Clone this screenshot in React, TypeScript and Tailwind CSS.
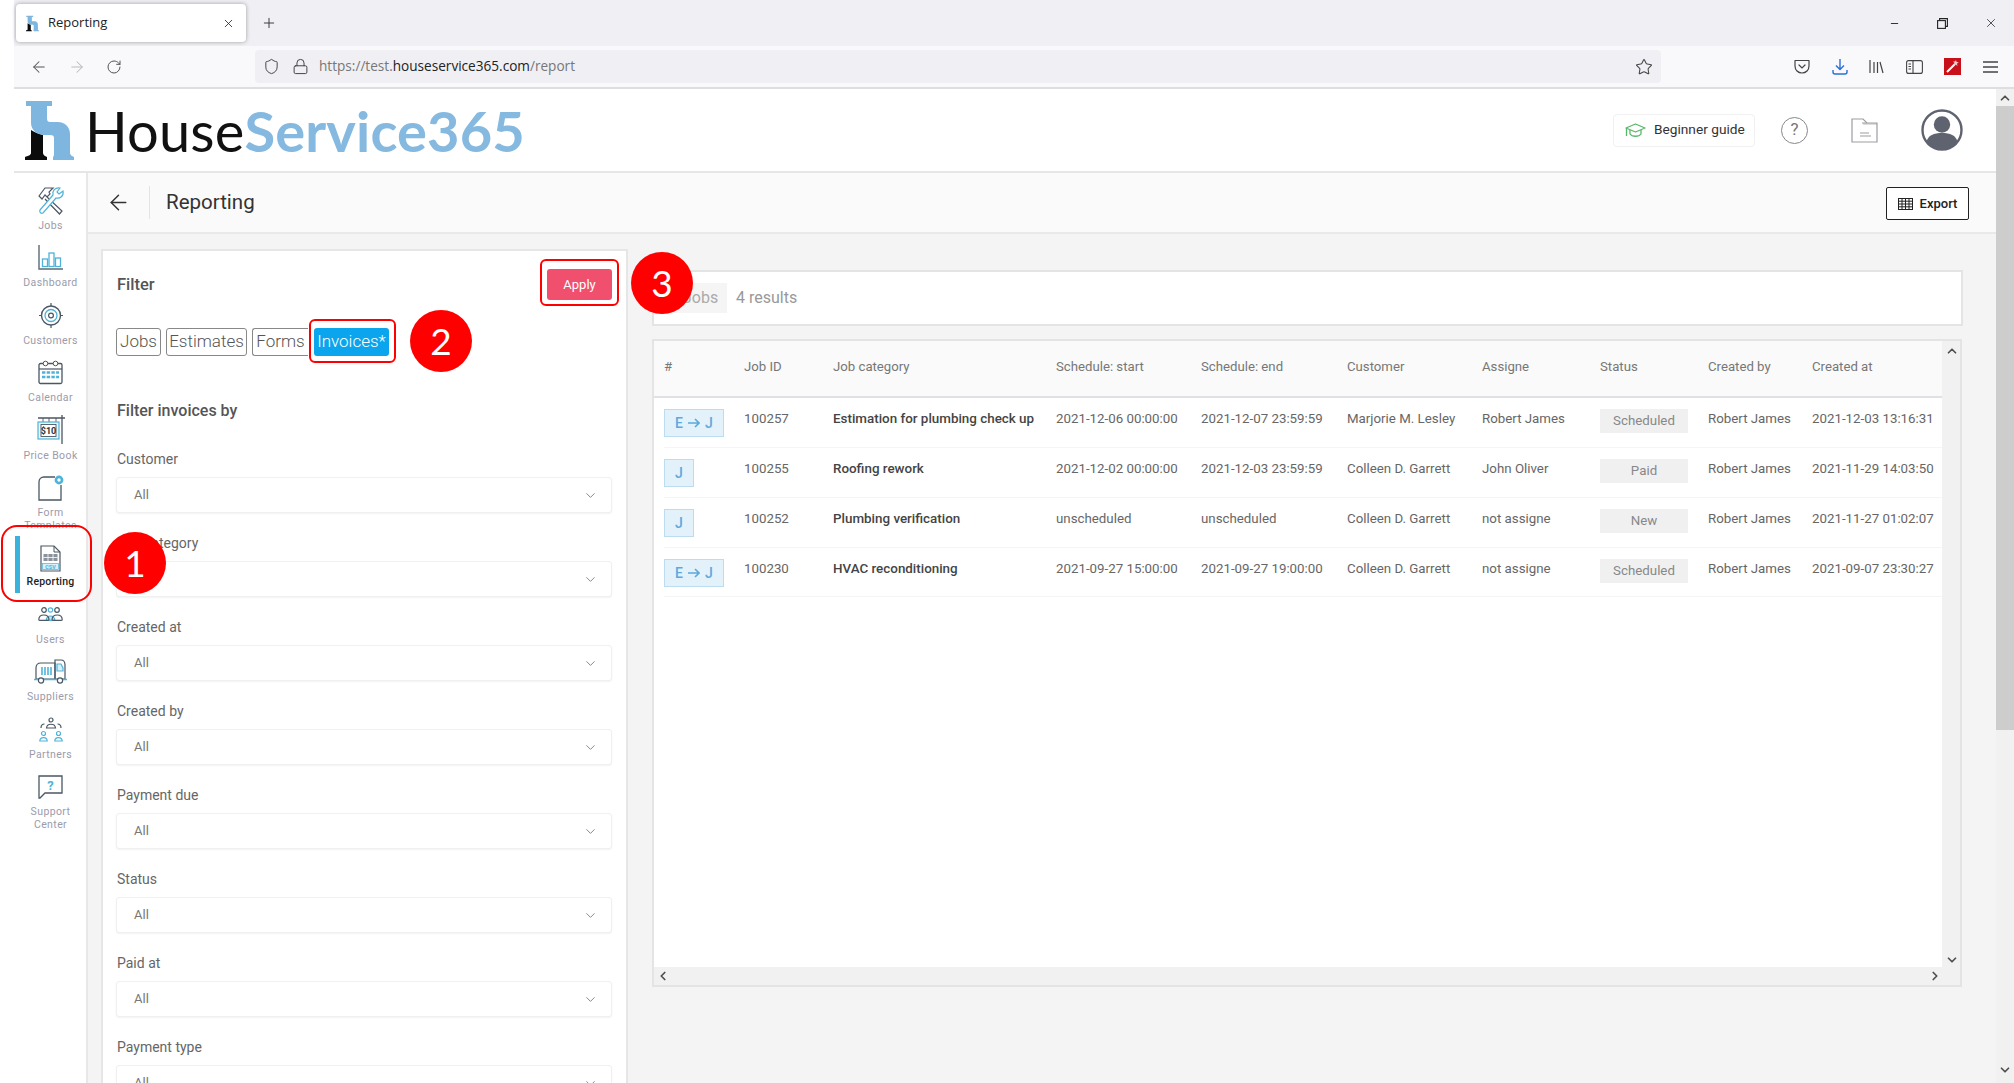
import { ArrowLeft, ArrowRight, ChevronDown, ChevronLeft, ChevronRight, ChevronUp, Lock, Minus, Plus, RotateCw, Shield, Star, X } from "lucide-react";
import type { ReactNode } from "react";

const DARK = "#4b5763";
const BLUE = "#4fb3d9";

const LogoMark = ({ className }: { className: string }) => (
    <svg className={className} viewBox="0 0 49 59">
        <path d="M6 29 C9 31 14 33 18 34 V52 C18 54 20 55 22 56 V59 H0 V56 C3 55 6 54 6 52 Z" fill="#0b0b0b" />
        <path
            d="M1 0 H27 V5 H22 V17 C22 20 23 21 25 21 H33 C40 21 45 26 45 33 V52 C45 54 47 55 49 56 V59 H28 V56 C29 55 29 54 29 52 V37 C29 35 28 34 25 34 H19 C12 34 6 29 6 22 V5 H1 Z"
            fill="#7fb6e0"
        />
    </svg>
);

const JobsIcon = () => (
    <svg className="w-[29px] h-[29px]" viewBox="0 0 29 29" fill="none" strokeWidth="1.2">
        <path d="M3 10 L9 2 L17 2 L13 6 L14 8 L11 11 L9 9 L6 13 Z" stroke={DARK} fill="#fff" />
        <path d="M11 11 L26 25 L23.5 28 L9 13" stroke={DARK} fill="#fff" />
        <path d="M4 24 L17 9 C16 5 19 1 24 2 L21 6 L23 8 L27 5 C28 10 24 13 20 12 L7 27 C5 28 3 26 4 24 Z" stroke={BLUE} fill="#fff" />
    </svg>
);

const DashboardIcon = () => (
    <svg className="w-[25px] h-[25px]" viewBox="0 0 25 25" fill="none">
        <path d="M1 0 V24 H25" stroke="#5a6b78" strokeWidth="1.4" />
        <rect x="4.5" y="14" width="5" height="7.5" stroke={BLUE} strokeWidth="1.3" />
        <rect x="11" y="8" width="5" height="13.5" stroke={BLUE} strokeWidth="1.3" />
        <rect x="17.5" y="13" width="5" height="8.5" stroke={BLUE} strokeWidth="1.3" />
    </svg>
);

const CustomersIcon = () => (
    <svg className="w-[24px] h-[25px]" viewBox="0 0 24 25" fill="none">
        <circle cx="12" cy="12.5" r="9.5" stroke={DARK} strokeWidth="1.4" />
        <circle cx="12" cy="12.5" r="6" stroke={BLUE} strokeWidth="1.3" />
        <circle cx="12" cy="12.5" r="2.4" stroke={DARK} strokeWidth="1.2" />
        <path d="M12 0 V3 M12 22 V25 M0 12.5 H2.5 M21.5 12.5 H24" stroke={DARK} strokeWidth="1.2" />
    </svg>
);

const CalendarIcon = () => (
    <svg className="w-[25px] h-[25px]" viewBox="0 0 25 25" fill="none">
        <rect x="1" y="3.5" width="23" height="20" rx="1.5" stroke={DARK} strokeWidth="1.3" />
        <path d="M1 9 H24" stroke={DARK} strokeWidth="1.2" />
        <circle cx="7.5" cy="3.5" r="2.3" fill="#fff" stroke={DARK} />
        <circle cx="17.5" cy="3.5" r="2.3" fill="#fff" stroke={DARK} />
        <path d="M4 12.5 H21 M4 17 H21" stroke={BLUE} strokeWidth="2.6" strokeDasharray="3.4 1.3" />
    </svg>
);

const PriceBookIcon = () => (
    <svg className="w-[28px] h-[30px]" viewBox="0 0 28 30">
        <path d="M1 3 H28 M25 0 V29" stroke={DARK} strokeWidth="1.3" fill="none" />
        <path d="M6 3 V7 M12 3 V7 M19 3 V7" stroke={DARK} strokeWidth="0.9" fill="none" />
        <rect x="1" y="7" width="21" height="17" stroke={BLUE} strokeWidth="1.2" fill="#e8f5fb" />
        <rect x="4" y="9.5" width="15" height="12" stroke={DARK} strokeWidth="0.9" fill="#fff" />
        <text x="11.5" y="19" textAnchor="middle" fontSize="9" fontWeight="700" fill="#333" fontFamily="Roboto, sans-serif">$10</text>
    </svg>
);

const FormIcon = () => (
    <svg className="w-[26px] h-[26px]" viewBox="0 0 26 26" fill="none">
        <path d="M6 2 H17 M23 10 V25 H1 V7 C1 4 3 2 6 2" stroke={DARK} strokeWidth="1.3" />
        <circle cx="21" cy="5" r="4.4" fill={BLUE} />
        <circle cx="21" cy="5" r="1.7" fill="#fff" />
    </svg>
);

const ReportingIcon = () => (
    <svg className="w-[21px] h-[27px]" viewBox="0 0 21 27" fill="none">
        <path d="M1 1 H14 L20 7 V26 H1 Z" stroke={DARK} strokeWidth="1.2" fill="#fff" />
        <path d="M14 1 V7 H20" stroke={DARK} strokeWidth="1" />
        <rect x="3.5" y="9" width="14" height="7" fill="#8a929b" />
        <path d="M3.5 12.5 H17.5 M8 9 V16 M13 9 V16" stroke="#fff" strokeWidth="0.8" />
        <rect x="2.5" y="18.5" width="16" height="6" fill="#d9eef8" stroke={BLUE} strokeWidth="0.7" />
        <text x="10.5" y="23.6" textAnchor="middle" fontSize="5.4" fontWeight="700" fill={BLUE} fontFamily="Roboto, sans-serif">CSV</text>
    </svg>
);

const UsersIcon = () => (
    <svg className="w-[25px] h-[14px]" viewBox="0 0 25 14" fill="none" strokeWidth="1.2">
        <circle cx="12.5" cy="3" r="2.2" stroke={BLUE} />
        <path d="M8 13.4 C9 7.5 16 7.5 17 13.4 Z" fill={BLUE} fillOpacity="0.35" stroke={BLUE} />
        <circle cx="6" cy="3" r="2.3" stroke={DARK} fill="#fff" />
        <circle cx="19" cy="3" r="2.3" stroke={DARK} fill="#fff" />
        <path d="M0.8 12.5 C1 6.5 10.5 6.5 11 12.5 C11 13.4 10 13.4 9 13.4 H2 C1 13.4 0.8 13.2 0.8 12.5 Z" stroke={DARK} />
        <path d="M14 12.5 C14.5 6.5 24 6.5 24.2 12.5 C24.2 13.2 24 13.4 23 13.4 H16 C15 13.4 14 13.4 14 12.5 Z" stroke={DARK} />
    </svg>
);

const SuppliersIcon = () => (
    <svg className="w-[33px] h-[25px]" viewBox="0 0 33 25" fill="none" strokeWidth="1.2">
        <path d="M7 4 H21 V20 H2 V9 C2 6 4 4 7 4 Z" stroke={DARK} />
        <path d="M8 8 V16 M11 8 V16 M14 8 V16 M17 8 V16" stroke={BLUE} strokeWidth="1.6" />
        <path d="M21 1 H27 C30 1 31 3 31 6 V20 H21 Z" stroke={DARK} />
        <path d="M23 5 H27 L29 9 V12 H23 Z" stroke={BLUE} fill="#d9eef8" />
        <path d="M0 20.5 H33" stroke={BLUE} strokeWidth="1.4" />
        <circle cx="7" cy="21.5" r="2.6" fill="#fff" stroke={DARK} />
        <circle cx="26" cy="21.5" r="2.6" fill="#fff" stroke={DARK} />
    </svg>
);

const PartnersIcon = () => (
    <svg className="w-[24px] h-[25px]" viewBox="0 0 24 25" fill="none" strokeWidth="1.2">
        <circle cx="12" cy="3" r="2" stroke={DARK} />
        <path d="M7.5 11 C8 6 16 6 16.5 11 Z" stroke={DARK} />
        <path d="M2 11 C2 8 3.5 7 5.5 7 M22 11 C22 8 20.5 7 18.5 7" stroke={DARK} />
        <circle cx="4.5" cy="16.5" r="2" stroke={BLUE} />
        <path d="M0.8 24 C1 19.5 8 19.5 8.2 24 Z" stroke={BLUE} />
        <circle cx="19.5" cy="16.5" r="2" stroke={BLUE} />
        <path d="M15.8 24 C16 19.5 23 19.5 23.2 24 Z" stroke={BLUE} />
    </svg>
);

const SupportIcon = () => (
    <svg className="w-[25px] h-[24px]" viewBox="0 0 25 24" fill="none">
        <path d="M1 1 H24 V18 H7 L2 23 H1 Z" stroke={DARK} strokeWidth="1.3" />
        <text x="12.5" y="14.5" textAnchor="middle" fontSize="13" fontWeight="700" fill={BLUE} fontFamily="Roboto, sans-serif">?</text>
    </svg>
);

const PocketIcon = () => (
    <svg className="w-[16px] h-[15px]" viewBox="0 0 16 15" fill="none" stroke="#444" strokeWidth="1.2">
        <path d="M1 1.5 H15 V7 C15 11 12 14 8 14 C4 14 1 11 1 7 Z" strokeLinejoin="round" />
        <path d="M5 6 L8 9 L11 6" strokeLinecap="round" />
    </svg>
);

const DownloadIcon = () => (
    <svg className="w-[16px] h-[17px]" viewBox="0 0 16 17" fill="none" stroke="#2a6fd6" strokeWidth="1.4">
        <path d="M8 1 V11 M4 7.5 L8 11.5 L12 7.5" />
        <path d="M1 12 V14 C1 15.2 1.8 16 3 16 H13 C14.2 16 15 15.2 15 14 V12" />
    </svg>
);

const LibraryIcon = () => (
    <svg className="w-[15px] h-[15px]" viewBox="0 0 15 15" fill="none" stroke="#444" strokeWidth="1.2">
        <path d="M1 1 V14 M5 3 V14 M8.5 3 V14 M11 3 L14 14" />
    </svg>
);

const PanelIcon = () => (
    <svg className="w-[17px] h-[14px]" viewBox="0 0 17 14" fill="none" stroke="#444" strokeWidth="1.1">
        <rect x="0.6" y="0.6" width="15.8" height="12.8" rx="2" />
        <path d="M7 1 V13 M2.5 4 H5 M2.5 6.5 H5 M2.5 9 H5" />
    </svg>
);

const ExtensionIcon = () => (
    <svg className="w-[17px] h-[17px]" viewBox="0 0 17 17">
        <rect width="17" height="17" fill="#c8101a" />
        <path d="M3 14 L11 6" stroke="#fff" strokeWidth="2" />
        <path d="M12 2 L12.6 4 L15 4.4 L13 5.6 L13.4 8 L11.8 6.4 L10 7 L10.6 5 L9 3.6 L11 3.6 Z" fill="#f6c9c9" />
    </svg>
);

const RestoreIcon = () => (
    <svg className="w-[11px] h-[11px]" viewBox="0 0 11 11" fill="none" stroke="#222" strokeWidth="1.1">
        <rect x="0.6" y="2.6" width="7.8" height="7.8" />
        <path d="M2.6 2.6 V0.6 H10.4 V8.4 H8.4" />
    </svg>
);

const GradIcon = () => (
    <svg className="w-[21px] h-[15px]" viewBox="0 0 21 15" fill="none" stroke="#57b86b" strokeWidth="1.3">
        <path d="M10.5 1 L20 5 L10.5 9 L1 5 Z" strokeLinejoin="round" />
        <path d="M5 7 V11 C7 14 14 14 16 11 V7" />
        <path d="M1.5 5 V13" />
    </svg>
);

const FolderIcon = () => (
    <svg className="w-[27px] h-[25px]" viewBox="0 0 27 25" fill="none" stroke="#9a9da2" strokeWidth="1.2">
        <path d="M1 1 H12 L16 5 H26 V24 H1 Z" />
        <path d="M11 5 H16 M9 15 H18 M9 18 H20" />
        <path d="M12 6 H26" strokeWidth="0.7" />
    </svg>
);

const AvatarIcon = () => (
    <svg className="w-[42px] h-[42px]" viewBox="0 0 42 42">
        <circle cx="21" cy="21" r="19.5" fill="#fff" stroke="#5f6370" strokeWidth="2.4" />
        <circle cx="21" cy="15.5" r="8.2" fill="#5f6370" />
        <path d="M5.5 33 C7 26 13 24 21 24 C29 24 35 26 36.5 33 C32 38 27 40 21 40 C15 40 10 38 5.5 33 Z" fill="#5f6370" />
    </svg>
);

const TableIcon = () => (
    <svg className="w-[15px] h-[12px]" viewBox="0 0 15 12" fill="none" stroke="#222" strokeWidth="1">
        <rect x="0.5" y="0.5" width="14" height="11" />
        <path d="M0.5 3.2 H14.5 M0.5 6 H14.5 M0.5 8.8 H14.5 M4 0.5 V11.5 M7.5 0.5 V11.5 M11 0.5 V11.5" />
    </svg>
);

const SideItem = ({ icon, label }: { icon: ReactNode; label: ReactNode }) => (
    <div className="flex flex-col items-center">
        <div className="h-[30px] flex items-center justify-center">{icon}</div>
        <div className="mt-[3.5px] text-[10.5px] leading-[13px] tracking-[0.4px] text-center text-[#9b9bab]">{label}</div>
    </div>
);

const Sidebar = () => (
    <aside className="w-[74px] shrink-0 bg-white border-r-2 border-[#e8e8e8] flex flex-col pt-[12px]">
        <div className="flex flex-col gap-[11px] pl-[1px]">
            <SideItem icon={<JobsIcon />} label="Jobs" />
            <SideItem icon={<DashboardIcon />} label="Dashboard" />
            <SideItem icon={<CustomersIcon />} label="Customers" />
            <SideItem icon={<CalendarIcon />} label="Calendar" />
            <SideItem icon={<PriceBookIcon />} label="Price Book" />
            <SideItem icon={<FormIcon />} label={<>Form<br />Templates</>} />
        </div>
        <div className="relative -mt-[4px] h-[65px] bg-white flex flex-col justify-end">
            <div className="flex border-l-[5px] border-[#39b3dc] ml-[1px] h-[57px]">
                <div className="flex-1 flex flex-col items-center pt-[9px] pr-[5px]">
                    <ReportingIcon />
                    <div className="mt-[3px] text-[10.5px] leading-[13px] tracking-[0.2px] font-medium text-[#222]">Reporting</div>
                </div>
            </div>
        </div>
        <div className="flex flex-col gap-[11px] mt-[6px] pl-[1px]">
            <SideItem icon={<UsersIcon />} label="Users" />
            <SideItem icon={<SuppliersIcon />} label="Suppliers" />
            <SideItem icon={<PartnersIcon />} label="Partners" />
            <SideItem icon={<SupportIcon />} label={<>Support<br />Center</>} />
        </div>
    </aside>
);

const FILTERS = ["Customer", "Job category", "Created at", "Created by", "Payment due", "Status", "Paid at", "Payment type"];

const FilterField = ({ label }: { label: string }) => (
    <div className="mb-[20px]">
        <div className="text-[14px] leading-[20px] text-[#666]">{label}</div>
        <div className="mt-[8px] -ml-[1px] h-[36px] rounded-[3px] bg-white border border-[#f0f0f0] shadow-[0_1px_2px_rgba(0,0,0,0.05)] flex items-center justify-between pl-[17px] pr-[13px]">
            <span className="text-[13px] text-[#777]">All</span>
            <ChevronDown className="w-[15px] h-[15px] text-[#777]" strokeWidth={1.4} />
        </div>
    </div>
);

const FilterPanel = () => (
    <section className="w-[527px] shrink-0 bg-white border-2 border-[#e6e6e6] border-b-0 px-[14px] overflow-hidden">
        <div className="flex items-center justify-between pt-[18px]">
            <div className="pt-[1px] text-[16.5px] font-medium text-[#555]">Filter</div>
            <button className="w-[65px] h-[31px] rounded-[3px] bg-[#f0506e] text-white text-[13px]">Apply</button>
        </div>
        <div className="flex gap-[5px] mt-[28px] -ml-[1px] text-[17px] font-light text-[#555]">
            <div className="h-[28px] w-[45px] flex items-center justify-center rounded-[3px] border border-[#888]">Jobs</div>
            <div className="h-[28px] w-[81px] flex items-center justify-center rounded-[3px] border border-[#888]">Estimates</div>
            <div className="h-[28px] w-[56px] flex items-center justify-center rounded-l-[3px] border border-r-0 border-[#888]">Forms</div>
            <div className="ml-[1px] h-[28px] w-[75px] flex items-center justify-center rounded-[3px] bg-[#0aa5ed] text-white">Invoices*</div>
        </div>
        <div className="mt-[43px] text-[16px] leading-[24px] font-medium text-[#555]">Filter invoices by</div>
        <div className="mt-[26px]">
            {FILTERS.map((f) => (
                <FilterField key={f} label={f} />
            ))}
        </div>
    </section>
);

const COLS = "grid grid-cols-[80px_89px_223px_145px_146px_135px_118px_108px_104px_1fr]";
const HEADERS = ["#", "Job ID", "Job category", "Schedule: start", "Schedule: end", "Customer", "Assigne", "Status", "Created by", "Created at"];

const ROWS = [
    { converted: true, id: "100257", name: "Estimation for plumbing check up", start: "2021-12-06 00:00:00", end: "2021-12-07 23:59:59", customer: "Marjorie M. Lesley", assignee: "Robert James", status: "Scheduled", at: "2021-12-03 13:16:31" },
    { converted: false, id: "100255", name: "Roofing rework", start: "2021-12-02 00:00:00", end: "2021-12-03 23:59:59", customer: "Colleen D. Garrett", assignee: "John Oliver", status: "Paid", at: "2021-11-29 14:03:50" },
    { converted: false, id: "100252", name: "Plumbing verification", start: "unscheduled", end: "unscheduled", customer: "Colleen D. Garrett", assignee: "not assigne", status: "New", at: "2021-11-27 01:02:07" },
    { converted: true, id: "100230", name: "HVAC reconditioning", start: "2021-09-27 15:00:00", end: "2021-09-27 19:00:00", customer: "Colleen D. Garrett", assignee: "not assigne", status: "Scheduled", at: "2021-09-07 23:30:27" },
];

const KindBadge = ({ converted }: { converted: boolean }) => (
    <span className="inline-flex h-[28px] px-[10px] min-w-[30px] items-center justify-center gap-[5px] bg-[#e3f1fb] border border-[#bcdcf2] text-[#5ea9dc] text-[14px] font-medium">
        {converted && (
            <>
                E
                <svg className="w-[12px] h-[10px]" viewBox="0 0 12 10" fill="none" stroke="#5ea9dc" strokeWidth="1.6">
                    <path d="M0 5 H11 M7 1 L11 5 L7 9" />
                </svg>
            </>
        )}
        J
    </span>
);

const ResultsTable = () => (
    <div className="h-[648px] bg-white border-2 border-[#e4e4e4] flex flex-col">
        <div className="flex flex-1 min-h-0">
            <div className="flex-1 min-w-0 pl-[10px]">
                <div className={`${COLS} -ml-[10px] pl-[10px] pb-[3px] h-[57px] items-center bg-[#fafafa] border-b-2 border-[#dfe1e6] text-[13.2px] text-[#777]`}>
                    {HEADERS.map((h) => (
                        <div key={h}>{h}</div>
                    ))}
                </div>
                {ROWS.map((r) => (
                    <div key={r.id} className={`${COLS} h-[49.85px] text-[13.3px] leading-[16px] text-[#666] border-b border-[#f5f5f5] pt-[13px]`}>
                        <div className="-mt-[2px]">
                            <KindBadge converted={r.converted} />
                        </div>
                        <div>{r.id}</div>
                        <div className="font-medium text-[13.4px] text-[#444]">{r.name}</div>
                        <div>{r.start}</div>
                        <div>{r.end}</div>
                        <div>{r.customer}</div>
                        <div>{r.assignee}</div>
                        <div className="-mt-[2px]">
                            <span className="flex w-[88px] h-[24px] items-center justify-center bg-[#f0f0f0] text-[#888]">{r.status}</span>
                        </div>
                        <div>Robert James</div>
                        <div>{r.at}</div>
                    </div>
                ))}
            </div>
            <div className="w-[18px] bg-[#f1f1f1] flex flex-col justify-between items-center pt-[3px] pl-[2px]">
                <ChevronUp className="w-[14px] h-[14px] text-[#505050]" strokeWidth={3} />
                <ChevronDown className="w-[14px] h-[14px] text-[#505050]" strokeWidth={3} />
            </div>
        </div>
        <div className="h-[18px] bg-[#f1f1f1] flex items-center justify-between pl-[2px] pr-[18px]">
            <ChevronLeft className="w-[14px] h-[14px] text-[#505050]" strokeWidth={3} />
            <ChevronRight className="w-[14px] h-[14px] text-[#505050]" strokeWidth={3} />
        </div>
    </div>
);

const Results = () => (
    <section className="w-[1311px] shrink-0 pt-[21px]">
        <div className="h-[56px] bg-white border-2 border-[#e4e4e4] flex items-center pl-[14px]">
            <div className="h-[30px] w-[59px] pl-[15px] flex items-center bg-[#f5f5f5] text-[16px] text-[#aaa]">Jobs</div>
            <div className="ml-[9px] text-[16px] text-[#999]">4 results</div>
        </div>
        <div className="mt-[13px] w-[1310px]">
            <ResultsTable />
        </div>
    </section>
);

const BrowserChrome = () => (
    <>
        <div className="h-[46px] shrink-0 bg-[#f0f0f4] flex items-center pl-[2px]">
            <div className="w-[230px] h-[38px] bg-white rounded-[4px] shadow-[0_0_4px_rgba(0,0,0,0.35)] flex items-center pl-[10px] pr-[11px]">
                <LogoMark className="w-[13px] h-[17px]" />
                <span className="ml-[9px] flex-1 text-[13px] text-[#222] font-['Open_Sans',sans-serif]">Reporting</span>
                <X className="w-[13px] h-[13px] text-[#222]" strokeWidth={1.5} />
            </div>
            <Plus className="ml-[15px] w-[16px] h-[16px] text-[#333]" strokeWidth={1.4} />
            <div className="ml-auto flex items-center pr-[16px]">
                <Minus className="w-[11px] h-[11px] text-[#222]" strokeWidth={2} />
                <div className="ml-[37px]">
                    <RestoreIcon />
                </div>
                <X className="ml-[36px] w-[14px] h-[14px] text-[#222]" strokeWidth={1.3} />
            </div>
        </div>
        <div className="h-[43px] shrink-0 bg-[#f9f9fb] border-b-2 border-[#dedee0] flex items-center">
            <div className="w-[241px] flex items-center pl-[16px] gap-[20px] text-[#555]">
                <ArrowLeft className="w-[18px] h-[18px]" strokeWidth={1.4} />
                <ArrowRight className="w-[18px] h-[18px] text-[#bbb]" strokeWidth={1.4} />
                <RotateCw className="w-[16px] h-[16px]" strokeWidth={1.5} />
            </div>
            <div className="w-[1406px] h-[33px] bg-[#f0f0f4] rounded-[4px] flex items-center pl-[8px] pr-[8px]">
                <Shield className="w-[17px] h-[17px] text-[#444]" strokeWidth={1.4} />
                <Lock className="ml-[12px] w-[17px] h-[17px] text-[#444]" strokeWidth={1.4} />
                <span className="ml-[10px] flex-1 text-[13.6px] text-[#777] font-['Open_Sans',sans-serif]">
                    https://test.<span className="text-[#222]">houseservice365.com</span>/report
                </span>
                <Star className="w-[18px] h-[18px] text-[#444]" strokeWidth={1.4} />
            </div>
            <div className="ml-[133px] flex items-center gap-[21.6px]">
                <PocketIcon />
                <DownloadIcon />
                <LibraryIcon />
                <PanelIcon />
                <ExtensionIcon />
                <svg className="w-[15px] h-[12px]" viewBox="0 0 15 12" stroke="#444" strokeWidth="1.3">
                    <path d="M0 1 H15 M0 6 H15 M0 11 H15" />
                </svg>
            </div>
        </div>
    </>
);

const PageHeader = () => (
    <header className="h-[84px] shrink-0 bg-white border-b-2 border-[#e6e6e6] flex items-center pl-[11px] pr-[33px]">
        <LogoMark className="w-[49px] h-[59px]" />
        <div className="ml-[11px] pt-[1px] text-[56px] leading-none tracking-[0.15px] text-[#111] font-[Lato,sans-serif]">
            House<span className="font-bold text-[#85b9e0]">Service365</span>
        </div>
        <div className="ml-auto flex items-center">
            <div className="h-[33px] w-[142px] rounded-[4px] border border-[#f1f1f1] flex items-center pl-[11px]">
                <GradIcon />
                <span className="ml-[8px] pb-[2px] text-[13.7px] text-[#333]">Beginner guide</span>
            </div>
            <div className="ml-[26px] w-[27px] h-[27px] rounded-full border border-[#888] flex items-center justify-center text-[17px] text-[#777]">?</div>
            <div className="ml-[43px]">
                <FolderIcon />
            </div>
            <div className="ml-[43px]">
                <AvatarIcon />
            </div>
        </div>
    </header>
);

const SubHeader = () => (
    <div className="h-[61px] shrink-0 bg-[#fafafa] border-b-2 border-[#e9e9e9] flex items-center pl-[18px] pr-[27px]">
        <ArrowLeft className="w-[25px] h-[25px] text-[#333]" strokeWidth={1.4} />
        <div className="ml-[18px] w-px h-[33px] bg-[#e4e4e4]" />
        <h1 className="ml-[16px] text-[20.5px] text-[#333]">Reporting</h1>
        <button className="ml-auto mt-[2px] w-[83px] h-[33px] rounded-[2px] border border-[#222] bg-white flex items-center justify-center gap-[7px] text-[13px] font-medium text-[#222]">
            <TableIcon />
            Export
        </button>
    </div>
);

const PageScrollbar = () => (
    <div className="w-[18px] shrink-0 bg-[#f1f1f1] flex flex-col items-center">
        <div className="h-[17px] flex items-center">
            <ChevronUp className="w-[14px] h-[14px] text-[#505050]" strokeWidth={3} />
        </div>
        <div className="w-full h-[624px] bg-[#cdcdcd]" />
        <div className="mt-auto h-[20px] flex items-start">
            <ChevronDown className="w-[14px] h-[14px] text-[#505050]" strokeWidth={3} />
        </div>
    </div>
);

const Circle = ({ n, className }: { n: number; className: string }) => (
    <div className={`absolute w-[62px] h-[62px] rounded-full bg-[#f00] flex items-center justify-center text-white text-[37px] font-[Lato,sans-serif] ${className}`}>{n}</div>
);

export default function App() {
    return (
        <div className="relative w-[2014px] h-[1083px] overflow-hidden bg-white pl-[14px] flex flex-col font-[Roboto,sans-serif]">
            <BrowserChrome />
            <div className="flex flex-1 min-h-0">
                <div className="flex-1 min-w-0 flex flex-col">
                    <PageHeader />
                    <div className="flex flex-1 min-h-0">
                        <Sidebar />
                        <main className="flex-1 min-w-0 flex flex-col bg-[#f4f4f4]">
                            <SubHeader />
                            <div className="flex flex-1 min-h-0 gap-[24px] pl-[13px] pt-[15px] overflow-hidden">
                                <FilterPanel />
                                <Results />
                            </div>
                        </main>
                    </div>
                </div>
                <PageScrollbar />
            </div>

            {/* numbered callouts drawn on top of the screenshot */}
            <div className="absolute left-[1px] top-[525px] w-[91px] h-[77px] rounded-[16px] border-2 border-[#f00]" />
            <div className="absolute left-[309px] top-[319px] w-[87px] h-[44px] rounded-[6px] border-2 border-[#f00]" />
            <div className="absolute left-[540px] top-[259px] w-[79px] h-[47px] rounded-[6px] border-2 border-[#f00]" />
            <Circle n={1} className="left-[104px] top-[532px]" />
            <Circle n={2} className="left-[410px] top-[310px]" />
            <Circle n={3} className="left-[631px] top-[252px]" />
        </div>
    );
}
